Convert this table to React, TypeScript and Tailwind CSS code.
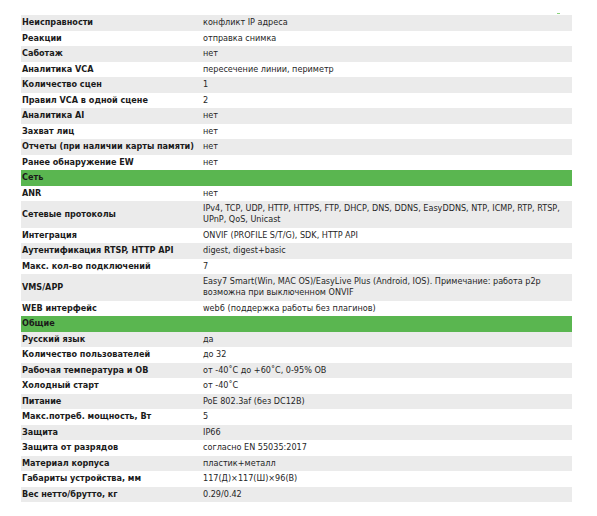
import React from 'react';

type Row = { label: string; value?: React.ReactNode; kind: 'g' | 'w' | 'h' };

const rows: Row[] = [
  { label: 'Неисправности', value: 'конфликт IP адреса', kind: 'g' },
  { label: 'Реакции', value: 'отправка снимка', kind: 'w' },
  { label: 'Саботаж', value: 'нет', kind: 'g' },
  { label: 'Аналитика VCA', value: 'пересечение линии, периметр', kind: 'w' },
  { label: 'Количество сцен', value: '1', kind: 'g' },
  { label: 'Правил VCA в одной сцене', value: '2', kind: 'w' },
  { label: 'Аналитика AI', value: 'нет', kind: 'g' },
  { label: 'Захват лиц', value: 'нет', kind: 'w' },
  { label: 'Отчеты (при наличии карты памяти)', value: 'нет', kind: 'g' },
  { label: 'Ранее обнаружение EW', value: 'нет', kind: 'w' },
  { label: 'Сеть', kind: 'h' },
  { label: 'ANR', value: 'нет', kind: 'w' },
  {
    label: 'Сетевые протоколы',
    value: (
      <>
        IPv4, TCP, UDP, HTTP, HTTPS, FTP, DHCP, DNS, DDNS, EasyDDNS, NTP, ICMP, RTP, RTSP,
        <br />
        UPnP, QoS, Unicast
      </>
    ),
    kind: 'g',
  },
  { label: 'Интеграция', value: 'ONVIF (PROFILE S/T/G), SDK, HTTP API', kind: 'w' },
  { label: 'Аутентификация RTSP, HTTP API', value: 'digest, digest+basic', kind: 'g' },
  { label: 'Макс. кол-во подключений', value: '7', kind: 'w' },
  {
    label: 'VMS/APP',
    value: (
      <>
        Easy7 Smart(Win, MAC OS)/EasyLive Plus (Android, IOS). Примечание: работа p2p
        <br />
        возможна при выключенном ONVIF
      </>
    ),
    kind: 'g',
  },
  { label: 'WEB интерфейс', value: 'web6 (поддержка работы без плагинов)', kind: 'w' },
  { label: 'Общие', kind: 'h' },
  { label: 'Русский язык', value: 'да', kind: 'g' },
  { label: 'Количество пользователей', value: 'до 32', kind: 'w' },
  { label: 'Рабочая температура и ОВ', value: 'от -40˚C до +60˚C, 0-95% ОВ', kind: 'g' },
  { label: 'Холодный старт', value: 'от -40˚C', kind: 'w' },
  { label: 'Питание', value: 'PoE 802.3af (без DC12В)', kind: 'g' },
  { label: 'Макс.потреб. мощность, Вт', value: '5', kind: 'w' },
  { label: 'Защита', value: 'IP66', kind: 'g' },
  { label: 'Защита от разрядов', value: 'согласно EN 55035:2017', kind: 'w' },
  { label: 'Материал корпуса', value: 'пластик+металл', kind: 'g' },
  { label: 'Габариты устройства, мм', value: '117(Д)×117(Ш)×96(В)', kind: 'w' },
  { label: 'Вес нетто/брутто, кг', value: '0.29/0.42', kind: 'g' },
];

export default function App() {
  return (
    <div className="w-[597px] h-[516px] bg-white font-['DejaVu_Sans_Condensed','DejaVu_Sans',sans-serif] text-[9px] leading-[11px] text-[#262626]">
      <div className="h-[15px] flex justify-end items-end pr-[37px] pb-[1px]">
        <div className="w-[3px] h-[1px] bg-[#8cd47e]" />
      </div>
      <table className="ml-[21px] w-[551px] border-collapse">
        <tbody>
          {rows.map((r) => {
            const bg = r.kind === 'g' ? 'bg-[#ebebeb]' : r.kind === 'h' ? 'bg-[#5ab650]' : 'bg-white';
            return (
              <tr key={r.label} className={bg}>
                <td className="w-[181px] pl-[1px] py-[2.25px] align-middle font-bold text-[#1a1a1a] whitespace-nowrap">
                  {r.label}
                </td>
                <td className="pl-[1px] py-[2.25px] align-middle">{r.value}</td>
              </tr>
            );
          })}
        </tbody>
      </table>
    </div>
  );
}
